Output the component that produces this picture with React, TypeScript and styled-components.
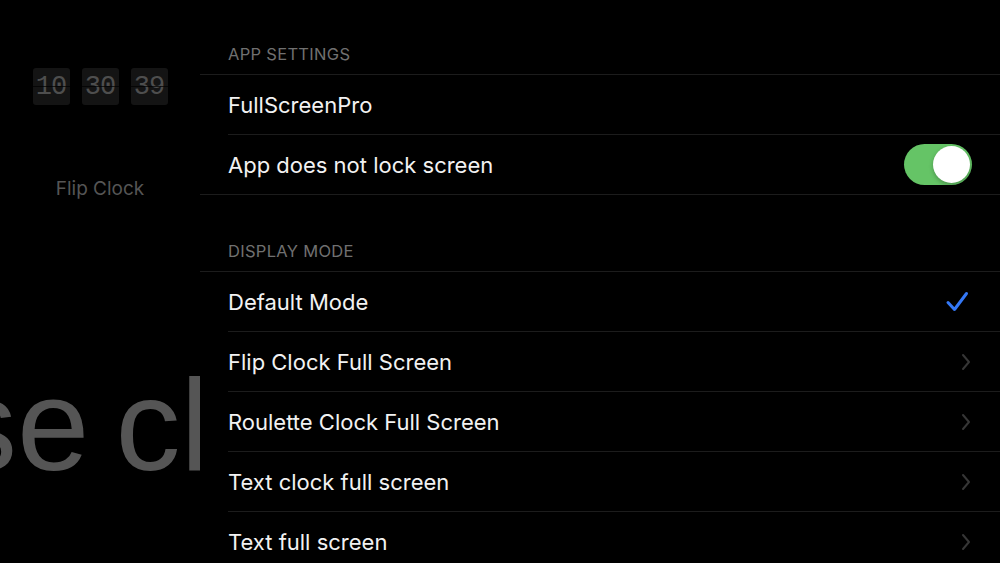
import React from 'react';
import styled, { createGlobalStyle } from 'styled-components';

const GlobalStyle = createGlobalStyle`
  html, body {
    margin: 0;
    padding: 0;
    background: #000;
    overflow: hidden;
  }
  * {
    box-sizing: border-box;
  }
`;

const Screen = styled.div`
  width: 1000px;
  height: 563px;
  display: flex;
  background: #000;
  font-family: Inter, 'Liberation Sans', sans-serif;
  overflow: hidden;
`;

const Preview = styled.div`
  width: 200px;
  flex-shrink: 0;
  display: flex;
  flex-direction: column;
  align-items: center;
  padding-top: 68px;
  overflow: hidden;
`;

const FlipRow = styled.div`
  display: flex;
  gap: 12px;
`;

const FlipTile = styled.div`
  position: relative;
  width: 37px;
  height: 37px;
  border-radius: 3px;
  background: #141414;
  display: flex;
  align-items: center;
  justify-content: center;
  font-family: 'Liberation Mono', 'DejaVu Sans Mono', monospace;
  font-size: 27px;
  color: #4e4e4e;
  letter-spacing: -1px;

  &::after {
    content: '';
    position: absolute;
    left: 0;
    right: 0;
    top: 18px;
    height: 1px;
    background: #000;
    opacity: 0.7;
  }
`;

const PreviewLabel = styled.div`
  margin-top: 72px;
  font-size: 19px;
  color: #555;
`;

// scrolling text, clipped by the panel edge
const Marquee = styled.div`
  align-self: flex-start;
  margin-top: 160px;
  margin-left: -48px;
  white-space: nowrap;
  font-family: 'Liberation Sans', Arial, sans-serif;
  font-size: 130px;
  word-spacing: -10px;
  line-height: 1;
  color: #555;
`;

const Settings = styled.div`
  flex: 1;
  display: flex;
  flex-direction: column;
`;

const SectionHeader = styled.div<{ $height: number }>`
  height: ${p => p.$height}px;
  flex-shrink: 0;
  display: flex;
  align-items: flex-end;
  padding: 0 0 10px 28px;
  font-size: 16.5px;
  letter-spacing: 0.3px;
  color: #707070;
  text-transform: uppercase;
  border-bottom: 1px solid #1c1c1c;
`;

const Row = styled.div<{ $last?: boolean }>`
  height: 60px;
  flex-shrink: 0;
  display: flex;
  align-items: center;
  padding-left: 28px;
  ${p => p.$last && 'border-bottom: 1px solid #1c1c1c;'}
`;

const RowInner = styled.div<{ $divider?: boolean }>`
  flex: 1;
  height: 100%;
  display: flex;
  align-items: center;
  justify-content: space-between;
  padding-right: 28px;
  ${p => p.$divider && 'border-bottom: 1px solid #1c1c1c;'}
`;

const RowLabel = styled.span`
  font-size: 22px;
  color: #f2f2f2;
`;

const Switch = styled.div<{ $on: boolean }>`
  width: 68px;
  height: 41px;
  border-radius: 21px;
  padding: 2px;
  display: flex;
  justify-content: ${p => (p.$on ? 'flex-end' : 'flex-start')};
  background: ${p => (p.$on ? '#65c466' : '#39393d')};
`;

const Knob = styled.div`
  width: 37px;
  height: 37px;
  border-radius: 50%;
  background: #fff;
  box-shadow: 0 2px 4px rgba(0, 0, 0, 0.25);
`;

const Check = () => (
  <svg width="24" height="24" viewBox="0 0 24 24" style={{ marginRight: 3 }}>
    <path d="M3 12.5 L9.5 19.5 L21.5 3.5" fill="none" stroke="#3478f6" strokeWidth="3" strokeLinecap="round" strokeLinejoin="round" />
  </svg>
);

const Chevron = () => (
  <svg width="10" height="18" viewBox="0 0 10 18" style={{ marginRight: 1 }}>
    <path d="M2 2 L8 9 L2 16" fill="none" stroke="#363636" strokeWidth="2" strokeLinecap="round" strokeLinejoin="round" />
  </svg>
);

const modes = [
  'Flip Clock Full Screen',
  'Roulette Clock Full Screen',
  'Text clock full screen',
  'Text full screen',
];

const App: React.FC = () => {
  return (
    <>
      <GlobalStyle />
      <Screen>
        <Preview>
          <FlipRow>
            {['10', '30', '39'].map(d => (
              <FlipTile key={d}>{d}</FlipTile>
            ))}
          </FlipRow>
          <PreviewLabel>Flip Clock</PreviewLabel>
          <Marquee>se cl</Marquee>
        </Preview>

        <Settings>
          <SectionHeader $height={75}>App Settings</SectionHeader>
          <Row>
            <RowInner $divider>
              <RowLabel>FullScreenPro</RowLabel>
            </RowInner>
          </Row>
          <Row $last>
            <RowInner>
              <RowLabel>App does not lock screen</RowLabel>
              <Switch $on>
                <Knob />
              </Switch>
            </RowInner>
          </Row>

          <SectionHeader $height={77}>Display Mode</SectionHeader>
          <Row>
            <RowInner $divider>
              <RowLabel>Default Mode</RowLabel>
              <Check />
            </RowInner>
          </Row>
          {modes.map((m, i) => (
            <Row key={m}>
              <RowInner $divider={i < modes.length - 1}>
                <RowLabel>{m}</RowLabel>
                <Chevron />
              </RowInner>
            </Row>
          ))}
        </Settings>
      </Screen>
    </>
  );
};

export default App;
